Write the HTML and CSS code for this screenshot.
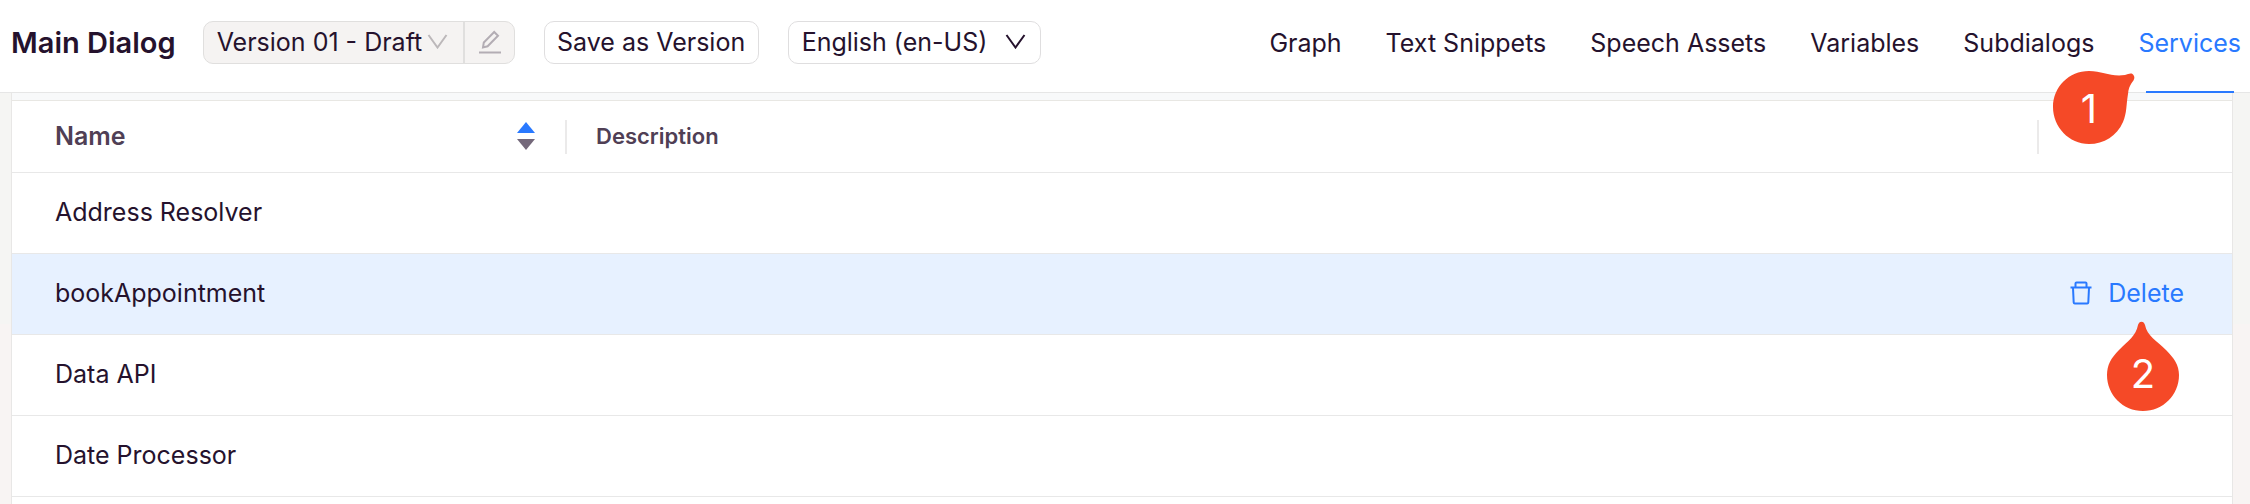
FILE: index.html
```html
<!DOCTYPE html>
<html lang="en">
<head>
    <meta charset="UTF-8">
    <meta name="viewport" content="width=device-width, initial-scale=1.0">
    <title>Main Dialog - Services</title>
    <link rel="stylesheet" href="styles.css">
</head>
<body>

    <header class="topbar">
        <h1>Main Dialog</h1>

        <div class="version">
            <div class="select-wrap">
                <select class="version-select" aria-label="Version" disabled>
                    <option>Version 01 - Draft</option>
                </select>
                <svg class="chevron" viewBox="0 0 20 15"><path d="M1 1L10 13.5L19 1"/></svg>
            </div>
            <button class="edit" aria-label="Rename version" disabled>
                <svg viewBox="0 0 24 24"><path d="M1 22.5H23M5 17.500L5.800 12.500L16.200 2L20 5.800L9.600 16.300Z"/></svg>
            </button>
        </div>

        <button class="save">Save as Version</button>

        <div class="select-wrap">
            <select class="language-select" aria-label="Language">
                <option>English (en-US)</option>
            </select>
            <svg class="chevron" viewBox="0 0 20 15"><path d="M1 1L10 13.5L19 1"/></svg>
        </div>

        <nav class="tabs">
            <a href="#graph">Graph</a>
            <a href="#snippets">Text Snippets</a>
            <a href="#speech">Speech Assets</a>
            <a href="#variables">Variables</a>
            <a href="#subdialogs">Subdialogs</a>
            <a href="#services" class="active">Services</a>
        </nav>

        <div class="marker marker-one">
            <svg viewBox="0 0 82 76"><path d="M36 1C50 1 57 7 72 5C76 4 79 2 81 6C83 11 76 12 75 24C73 36 74 42 70 52C64 66 51 74 36 74C16 74 0 57 0 37C0 17 16 1 36 1Z"/></svg>
            <span>1</span>
        </div>
    </header>

    <main class="panel">
        <table>
            <thead>
                <tr>
                    <th class="name" aria-sort="ascending">
                        <div class="head">
                            Name
                            <svg class="sorter" viewBox="0 0 18 28"><path class="up" d="M9 0L18 11H0Z"/><path class="down" d="M0 17H18L9 28Z"/></svg>
                        </div>
                    </th>
                    <th class="description"><div class="head">Description</div></th>
                    <th class="actions"></th>
                </tr>
            </thead>
            <tbody>
                <tr>
                    <td>Address Resolver</td>
                    <td></td>
                    <td></td>
                </tr>
                <tr class="selected">
                    <td>bookAppointment</td>
                    <td></td>
                    <td class="action-cell">
                        <button class="delete">
                            <svg viewBox="0 0 22 24"><path d="M0.500 6.500H21.500M5.500 6V2.500Q5.500 1.500 6.500 1.500H15.500Q16.500 1.500 16.500 2.500V6M3 7L3.700 21.500Q3.800 22.500 4.800 22.500H17.200Q18.200 22.500 18.300 21.500L19 7"/></svg>
                            Delete
                        </button>
                        <div class="marker marker-two">
                            <svg viewBox="0 0 72 90"><path d="M31 4C32 -0.500 37 -0.500 38 4C40 15 50 20 59 29C67 37 72 44 72 54C72 74 56 90 36 90C16 90 0 74 0 54C0 44 4 37 12 29C21 20 29 15 31 4Z"/></svg>
                            <span>2</span>
                        </div>
                    </td>
                </tr>
                <tr>
                    <td>Data API</td>
                    <td></td>
                    <td></td>
                </tr>
                <tr>
                    <td>Date Processor</td>
                    <td></td>
                    <td></td>
                </tr>
            </tbody>
        </table>
    </main>

</body>
</html>
```

FILE: styles.css
```css
* {
    box-sizing: border-box;
}
body {
    margin: 0;
    min-height: 100vh;
    display: flex;
    flex-direction: column;
    background: linear-gradient(#f5f5f3 324px, #f8f4f3 324px);
    color: #25122d;
    font-family: Inter, "Liberation Sans", sans-serif;
    font-size: 25px;
}
button, select {
    font: inherit;
    color: inherit;
    margin: 0;
    opacity: 1;
}
svg {
    display: block;
    fill: none;
    stroke: currentColor;
    stroke-width: 2;
}

/* top bar */
.topbar {
    position: relative;
    display: flex;
    align-items: center;
    height: 93px;
    padding: 0 9px 8px 11px;
    background: #fff;
    border-bottom: 1px solid #e6e6e6;
}
h1 {
    margin: 0 27px 0 0;
    font-size: 29px;
    font-weight: 600;
    white-space: nowrap;
}
.version {
    display: flex;
    height: 43px;
    margin-right: 29px;
    border: 1px solid #e0dfde;
    border-radius: 10px;
    background: #f5f3f2;
    overflow: hidden;
}
.select-wrap {
    position: relative;
}
select {
    appearance: none;
    height: 100%;
    border: none;
    background: none;
}
.version-select {
    width: 259px;
    padding: 0 13px;
}
.chevron {
    position: absolute;
    top: 13px;
    right: 15px;
    width: 21px;
    height: 15px;
    pointer-events: none;
}
.version .chevron {
    color: #bcb8ba;
    top: 12px;
}
.edit {
    width: 51px;
    padding: 0 0 0 13px;
    border: none;
    border-left: 2px solid #e0dfde;
    background: none;
    color: #b3adb4;
}
.edit svg {
    width: 24px;
    height: 24px;
}
.save, .language-select {
    height: 43px;
    border: 1px solid #dfdedf;
    border-radius: 10px;
    background: #fff;
    white-space: nowrap;
}
.save {
    width: 215px;
    padding: 0;
    margin-right: 29px;
}
.language-select {
    width: 253px;
    padding: 0 13px;
}
.tabs {
    display: flex;
    gap: 44px;
    margin: 2px 0 0 auto;
}
.tabs a {
    position: relative;
    color: inherit;
    text-decoration: none;
    line-height: 32px;
    white-space: nowrap;
}
.tabs .active {
    color: #2979ff;
}
.tabs .active::after {
    content: "";
    position: absolute;
    left: 8px;
    right: 7px;
    bottom: -34px;
    height: 2px;
    background: #2979ff;
}

/* services table */
.panel {
    flex: 1;
    margin: 0 17px 0 11px;
    padding-top: 7px;
    border: solid #e8e7e6;
    border-width: 0 1px;
    background: linear-gradient(#f8f9fa 7px, #fff 7px);
}
table {
    width: 100%;
    border-collapse: separate;
    border-spacing: 0;
    table-layout: fixed;
    border-top: 1px solid #e8e7e3;
}
th, td {
    height: 81px;
    padding: 0 43px 2px;
    border-bottom: 1px solid #e8e8e8;
    text-align: left;
    line-height: 32px;
}
th {
    height: 72px;
    padding: 0;
    color: #503f55;
    font-weight: 600;
}
.name {
    width: 555px;
}
.actions {
    width: 193px;
}
.head {
    display: flex;
    align-items: center;
    justify-content: space-between;
    height: 34px;
    padding: 0 30px 2px 43px;
    border-right: 2px solid #ebeaea;
}
.description .head {
    padding: 0 29px 2px;
    font-size: 22px;
}
.sorter {
    width: 18px;
    height: 28px;
    stroke: none;
}
.up {
    fill: #2979ff;
}
.down {
    fill: #74687a;
}
.selected td {
    background: #e7f1ff;
}
.selected .action-cell {
    position: relative;
    padding: 0 48px 2px 0;
}
.delete {
    display: flex;
    align-items: center;
    gap: 16px;
    margin-left: auto;
    padding: 0;
    border: none;
    background: none;
    color: #2979ff;
}
.delete svg {
    width: 22px;
    height: 24px;
}

/* numbered callouts */
.marker {
    position: absolute;
    z-index: 1;
    color: #fff;
    font-size: 40px;
    line-height: 74px;
    text-align: center;
}
.marker svg {
    fill: #f54927;
    stroke: none;
}
.marker span {
    position: absolute;
    left: 0;
    bottom: 0;
    width: 72px;
}
.marker-one {
    top: 70px;
    right: 115px;
    width: 82px;
    height: 76px;
}
.marker-two {
    top: 67px;
    right: 53px;
    width: 72px;
    height: 90px;
}
```
